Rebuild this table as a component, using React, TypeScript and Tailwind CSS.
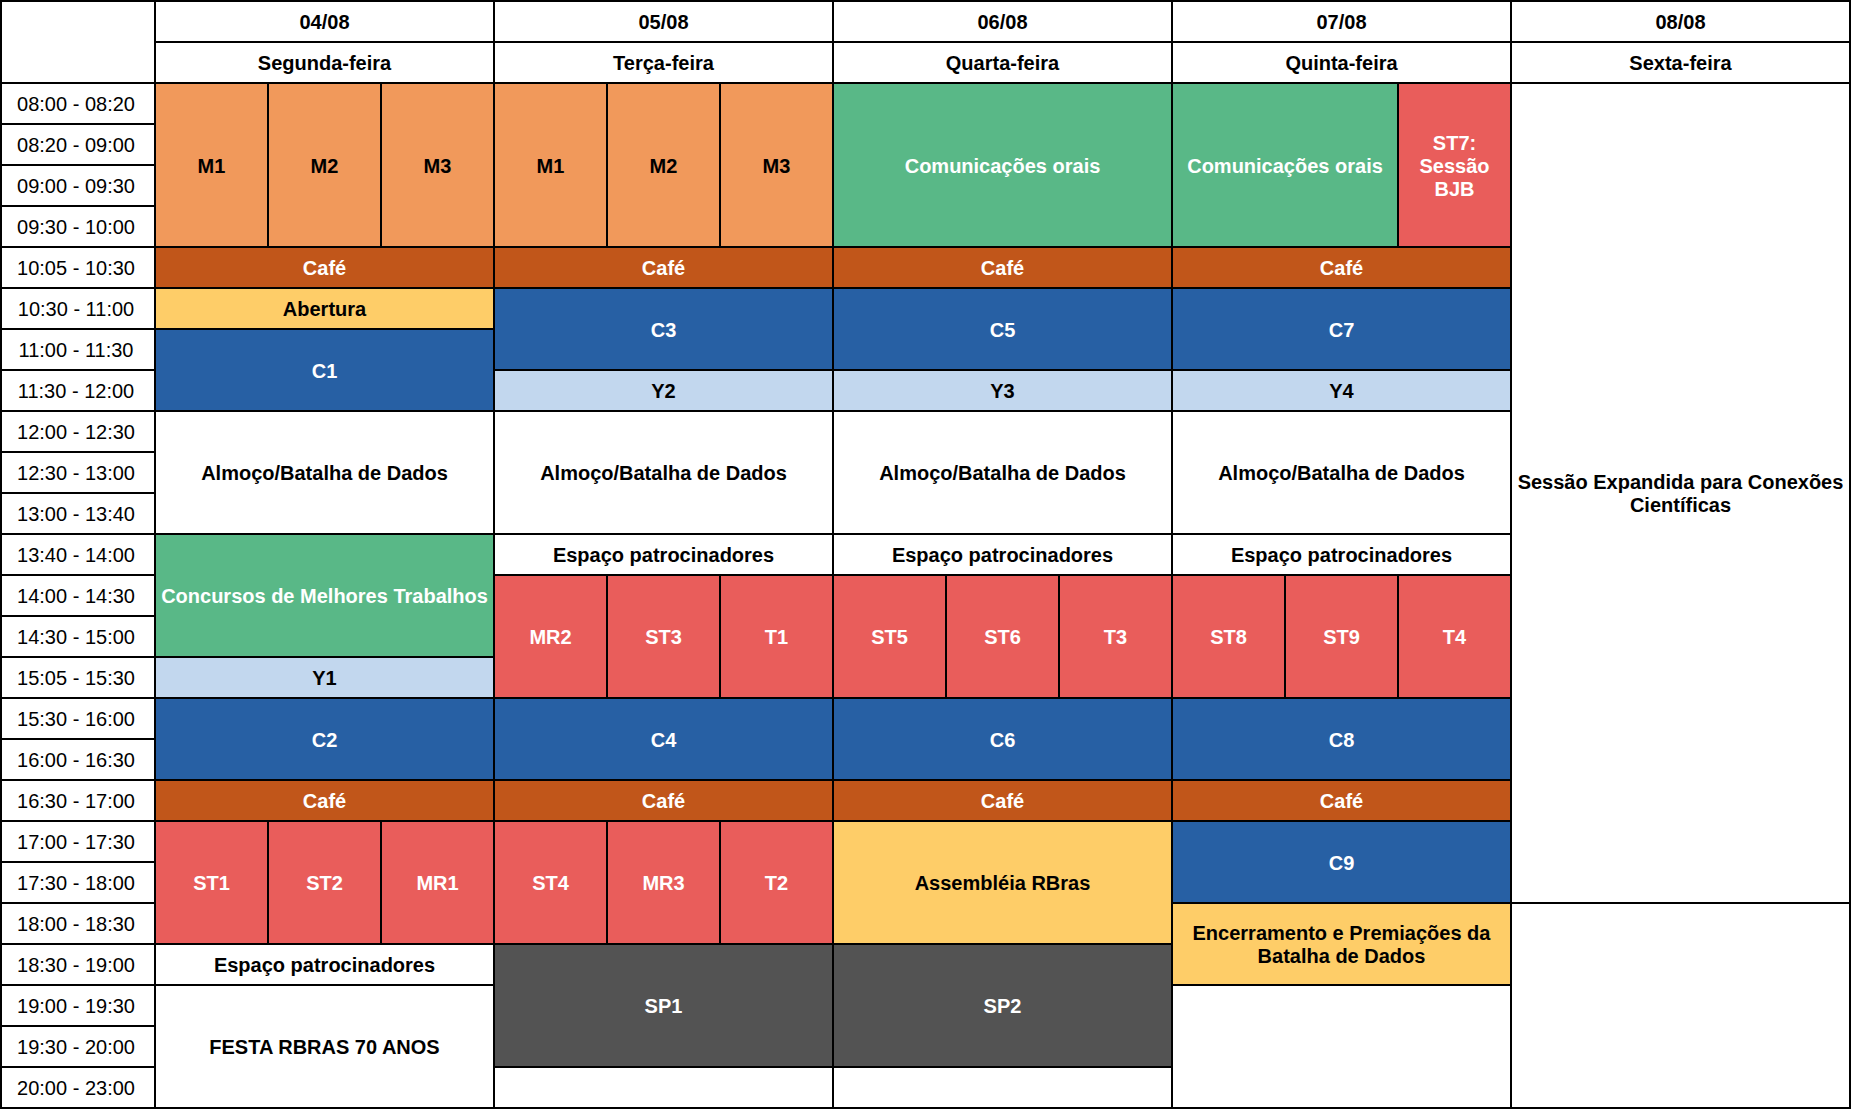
import React from "react";

type Cell = { cls: string; text?: React.ReactNode; tone: string };

const W = "bg-white text-black";
const OR = "bg-[#F1995B] text-black";
const CAFE = "bg-[#C1561A] text-white";
const BL = "bg-[#2760A4] text-white";
const LB = "bg-[#C2D7EE] text-black";
const GR = "bg-[#59B887] text-white";
const RD = "bg-[#E95D5B] text-white";
const YE = "bg-[#FECD68] text-black";
const GY = "bg-[#535353] text-white";

const times = [
  "08:00 - 08:20",
  "08:20 - 09:00",
  "09:00 - 09:30",
  "09:30 - 10:00",
  "10:05 - 10:30",
  "10:30 - 11:00",
  "11:00 - 11:30",
  "11:30 - 12:00",
  "12:00 - 12:30",
  "12:30 - 13:00",
  "13:00 - 13:40",
  "13:40 - 14:00",
  "14:00 - 14:30",
  "14:30 - 15:00",
  "15:05 - 15:30",
  "15:30 - 16:00",
  "16:00 - 16:30",
  "16:30 - 17:00",
  "17:00 - 17:30",
  "17:30 - 18:00",
  "18:00 - 18:30",
  "18:30 - 19:00",
  "19:00 - 19:30",
  "19:30 - 20:00",
  "20:00 - 23:00",
];

const timeRowCls = [
  "row-start-3",
  "row-start-4",
  "row-start-5",
  "row-start-6",
  "row-start-7",
  "row-start-8",
  "row-start-9",
  "row-start-10",
  "row-start-11",
  "row-start-12",
  "row-start-13",
  "row-start-14",
  "row-start-15",
  "row-start-16",
  "row-start-17",
  "row-start-18",
  "row-start-19",
  "row-start-20",
  "row-start-21",
  "row-start-22",
  "row-start-23",
  "row-start-24",
  "row-start-25",
  "row-start-26",
  "row-start-27",
];

const cells: Cell[] = [
  // header
  { cls: "row-start-1 row-span-2 col-start-1", tone: W },
  { cls: "row-start-1 col-start-2 col-span-3", text: "04/08", tone: W },
  { cls: "row-start-1 col-start-5 col-span-3", text: "05/08", tone: W },
  { cls: "row-start-1 col-start-8 col-span-3", text: "06/08", tone: W },
  { cls: "row-start-1 col-start-11 col-span-3", text: "07/08", tone: W },
  { cls: "row-start-1 col-start-14 col-span-3", text: "08/08", tone: W },
  { cls: "row-start-2 col-start-2 col-span-3", text: "Segunda-feira", tone: W },
  { cls: "row-start-2 col-start-5 col-span-3", text: "Terça-feira", tone: W },
  { cls: "row-start-2 col-start-8 col-span-3", text: "Quarta-feira", tone: W },
  { cls: "row-start-2 col-start-11 col-span-3", text: "Quinta-feira", tone: W },
  { cls: "row-start-2 col-start-14 col-span-3", text: "Sexta-feira", tone: W },

  // Monday
  { cls: "row-start-3 row-span-4 col-start-2", text: "M1", tone: OR },
  { cls: "row-start-3 row-span-4 col-start-3", text: "M2", tone: OR },
  { cls: "row-start-3 row-span-4 col-start-4", text: "M3", tone: OR },
  { cls: "row-start-7 col-start-2 col-span-3", text: "Café", tone: CAFE },
  { cls: "row-start-8 col-start-2 col-span-3", text: "Abertura", tone: YE },
  { cls: "row-start-9 row-span-2 col-start-2 col-span-3", text: "C1", tone: BL },
  { cls: "row-start-11 row-span-3 col-start-2 col-span-3", text: "Almoço/Batalha de Dados", tone: W },
  { cls: "row-start-14 row-span-3 col-start-2 col-span-3", text: "Concursos de Melhores Trabalhos", tone: GR },
  { cls: "row-start-17 col-start-2 col-span-3", text: "Y1", tone: LB },
  { cls: "row-start-18 row-span-2 col-start-2 col-span-3", text: "C2", tone: BL },
  { cls: "row-start-20 col-start-2 col-span-3", text: "Café", tone: CAFE },
  { cls: "row-start-21 row-span-3 col-start-2", text: "ST1", tone: RD },
  { cls: "row-start-21 row-span-3 col-start-3", text: "ST2", tone: RD },
  { cls: "row-start-21 row-span-3 col-start-4", text: "MR1", tone: RD },
  { cls: "row-start-24 col-start-2 col-span-3", text: "Espaço patrocinadores", tone: W },
  { cls: "row-start-25 row-span-3 col-start-2 col-span-3", text: "FESTA RBRAS 70 ANOS", tone: W },

  // Tuesday
  { cls: "row-start-3 row-span-4 col-start-5", text: "M1", tone: OR },
  { cls: "row-start-3 row-span-4 col-start-6", text: "M2", tone: OR },
  { cls: "row-start-3 row-span-4 col-start-7", text: "M3", tone: OR },
  { cls: "row-start-7 col-start-5 col-span-3", text: "Café", tone: CAFE },
  { cls: "row-start-8 row-span-2 col-start-5 col-span-3", text: "C3", tone: BL },
  { cls: "row-start-10 col-start-5 col-span-3", text: "Y2", tone: LB },
  { cls: "row-start-11 row-span-3 col-start-5 col-span-3", text: "Almoço/Batalha de Dados", tone: W },
  { cls: "row-start-14 col-start-5 col-span-3", text: "Espaço patrocinadores", tone: W },
  { cls: "row-start-15 row-span-3 col-start-5", text: "MR2", tone: RD },
  { cls: "row-start-15 row-span-3 col-start-6", text: "ST3", tone: RD },
  { cls: "row-start-15 row-span-3 col-start-7", text: "T1", tone: RD },
  { cls: "row-start-18 row-span-2 col-start-5 col-span-3", text: "C4", tone: BL },
  { cls: "row-start-20 col-start-5 col-span-3", text: "Café", tone: CAFE },
  { cls: "row-start-21 row-span-3 col-start-5", text: "ST4", tone: RD },
  { cls: "row-start-21 row-span-3 col-start-6", text: "MR3", tone: RD },
  { cls: "row-start-21 row-span-3 col-start-7", text: "T2", tone: RD },
  { cls: "row-start-24 row-span-3 col-start-5 col-span-3", text: "SP1", tone: GY },
  { cls: "row-start-27 col-start-5 col-span-3", tone: W },

  // Wednesday
  { cls: "row-start-3 row-span-4 col-start-8 col-span-3", text: "Comunicações orais", tone: GR },
  { cls: "row-start-7 col-start-8 col-span-3", text: "Café", tone: CAFE },
  { cls: "row-start-8 row-span-2 col-start-8 col-span-3", text: "C5", tone: BL },
  { cls: "row-start-10 col-start-8 col-span-3", text: "Y3", tone: LB },
  { cls: "row-start-11 row-span-3 col-start-8 col-span-3", text: "Almoço/Batalha de Dados", tone: W },
  { cls: "row-start-14 col-start-8 col-span-3", text: "Espaço patrocinadores", tone: W },
  { cls: "row-start-15 row-span-3 col-start-8", text: "ST5", tone: RD },
  { cls: "row-start-15 row-span-3 col-start-9", text: "ST6", tone: RD },
  { cls: "row-start-15 row-span-3 col-start-10", text: "T3", tone: RD },
  { cls: "row-start-18 row-span-2 col-start-8 col-span-3", text: "C6", tone: BL },
  { cls: "row-start-20 col-start-8 col-span-3", text: "Café", tone: CAFE },
  { cls: "row-start-21 row-span-3 col-start-8 col-span-3", text: "Assembléia RBras", tone: YE },
  { cls: "row-start-24 row-span-3 col-start-8 col-span-3", text: "SP2", tone: GY },
  { cls: "row-start-27 col-start-8 col-span-3", tone: W },

  // Thursday
  { cls: "row-start-3 row-span-4 col-start-11 col-span-2", text: "Comunicações orais", tone: GR },
  { cls: "row-start-3 row-span-4 col-start-13", text: "ST7: Sessão BJB", tone: RD },
  { cls: "row-start-7 col-start-11 col-span-3", text: "Café", tone: CAFE },
  { cls: "row-start-8 row-span-2 col-start-11 col-span-3", text: "C7", tone: BL },
  { cls: "row-start-10 col-start-11 col-span-3", text: "Y4", tone: LB },
  { cls: "row-start-11 row-span-3 col-start-11 col-span-3", text: "Almoço/Batalha de Dados", tone: W },
  { cls: "row-start-14 col-start-11 col-span-3", text: "Espaço patrocinadores", tone: W },
  { cls: "row-start-15 row-span-3 col-start-11", text: "ST8", tone: RD },
  { cls: "row-start-15 row-span-3 col-start-12", text: "ST9", tone: RD },
  { cls: "row-start-15 row-span-3 col-start-13", text: "T4", tone: RD },
  { cls: "row-start-18 row-span-2 col-start-11 col-span-3", text: "C8", tone: BL },
  { cls: "row-start-20 col-start-11 col-span-3", text: "Café", tone: CAFE },
  { cls: "row-start-21 row-span-2 col-start-11 col-span-3", text: "C9", tone: BL },
  { cls: "row-start-23 row-span-2 col-start-11 col-span-3", text: "Encerramento e Premiações da Batalha de Dados", tone: YE },
  { cls: "row-start-25 row-span-3 col-start-11 col-span-3", tone: W },

  // Friday
  { cls: "row-start-3 row-span-20 col-start-14 col-span-3", text: "Sessão Expandida para Conexões Científicas", tone: W },
  { cls: "row-start-23 row-span-5 col-start-14 col-span-3", tone: W },
];

export default function App() {
  return (
    <div className="w-[1855px] h-[1110px] bg-white font-['Liberation_Sans',Arial,sans-serif]">
      <div className="inline-grid grid-cols-[152px_repeat(15,111px)] grid-rows-[repeat(27,39px)] gap-[2px] p-[2px] bg-black">
        {times.map((t, i) => (
          <div
            key={t}
            className={`${timeRowCls[i]} col-start-1 flex items-center justify-center bg-white text-black text-[20px] leading-[23px] pt-[2px] pr-[4px]`}
          >
            {t}
          </div>
        ))}
        {cells.map((c, i) => (
          <div
            key={i}
            className={`${c.cls} ${c.tone} flex items-center justify-center text-center px-[3px] pt-[2px] font-bold text-[20px] leading-[23px]`}
          >
            {c.text}
          </div>
        ))}
      </div>
    </div>
  );
}
